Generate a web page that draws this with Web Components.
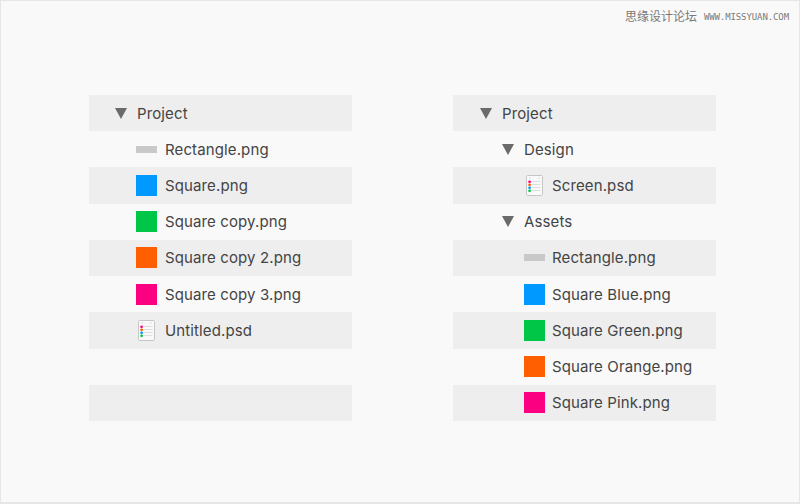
<!DOCTYPE html>
<html>
<head>
<meta charset="utf-8">
<style>
  html, body { margin: 0; padding: 0; }
  body { width: 800px; height: 504px; overflow: hidden; background: #f9f9f9; font-family: Inter, "Liberation Sans", sans-serif; }
</style>
</head>
<body>
<demo-frame>
  <span slot="mark">思缘设计论坛</span>
  <span slot="url">WWW.MISSYUAN.COM</span>
  <tree-panel>
    <tree-row indent="26" icon="arrow" band>Project</tree-row>
    <tree-row indent="47" icon="rect">Rectangle.png</tree-row>
    <tree-row indent="47" icon="#0099ff" band>Square.png</tree-row>
    <tree-row indent="47" icon="#00c647">Square copy.png</tree-row>
    <tree-row indent="47" icon="#ff5f00" band>Square copy 2.png</tree-row>
    <tree-row indent="47" icon="#fb0080">Square copy 3.png</tree-row>
    <tree-row indent="47" icon="psd" band>Untitled.psd</tree-row>
    <tree-row></tree-row>
    <tree-row band></tree-row>
  </tree-panel>
  <tree-panel style="--label-gap: 7px">
    <tree-row indent="27" icon="arrow" band>Project</tree-row>
    <tree-row indent="49" icon="arrow">Design</tree-row>
    <tree-row indent="71" icon="psd" band>Screen.psd</tree-row>
    <tree-row indent="49" icon="arrow">Assets</tree-row>
    <tree-row indent="71" icon="rect" band>Rectangle.png</tree-row>
    <tree-row indent="71" icon="#0099ff">Square Blue.png</tree-row>
    <tree-row indent="71" icon="#00c647" band>Square Green.png</tree-row>
    <tree-row indent="71" icon="#ff5f00">Square Orange.png</tree-row>
    <tree-row indent="71" icon="#fb0080" band>Square Pink.png</tree-row>
  </tree-panel>
</demo-frame>
<script>
class DemoFrame extends HTMLElement {
  constructor() {
    super()
    this.attachShadow({mode: "open"}).innerHTML = `
      <style>
        :host { display: block; box-sizing: border-box; width: 800px; height: 504px; border: 1px solid #e6e6e6; border-width: 1px 1px 2px 1px; background: #f9f9f9; }
        header { display: flex; justify-content: flex-end; align-items: center; gap: 7px; height: 29px; padding-right: 10px; color: #7a7a7a; }
        .mark { font: 12px/1 "Noto Sans CJK SC", sans-serif; }
        .url { font: 9px/1 "DejaVu Sans Mono", monospace; letter-spacing: -0.1px; margin-top: 4px; }
        main { display: flex; gap: 101px; padding: 65px 0 0 88px; }
      </style>
      <header><span class="mark"><slot name="mark"></slot></span><span class="url"><slot name="url"></slot></span></header>
      <main><slot></slot></main>
    `
  }
}
customElements.define("demo-frame", DemoFrame)

class TreePanel extends HTMLElement {
  constructor() {
    super()
    this.attachShadow({mode: "open"}).innerHTML = `
      <style>
        :host { display: grid; width: 263px; height: 326px; grid-template-rows: repeat(9, 1fr); }
      </style>
      <slot></slot>
    `
  }
}
customElements.define("tree-panel", TreePanel)

const PSD = `<svg class="psd" width="17" height="21" viewBox="0 0 17 21">
  <rect x="0.5" y="0.5" width="16" height="20" rx="1.2" fill="#f9f9f9" stroke="#c6c6c6"/>
  <path d="M3 3h2M12 3h2" stroke="#dcdcdc"/>
  <path d="M5.5 6.5h9M5.5 9.5h9M5.5 12.5h9M5.5 15.5h9" stroke="#dedede"/>
  <circle cx="3.6" cy="6.8" r="1.4" fill="#fb0080"/>
  <circle cx="3.6" cy="9.8" r="1.4" fill="#ff5f00"/>
  <circle cx="3.6" cy="12.8" r="1.4" fill="#0099ff"/>
  <circle cx="3.6" cy="15.8" r="1.4" fill="#00c647"/>
</svg>`

class TreeRow extends HTMLElement {
  constructor() {
    super()
    const indent = parseFloat(this.getAttribute("indent") || 0)
    const icon = this.getAttribute("icon")
    const arrow = icon == "arrow"
    let glyph = ""
    if (arrow) glyph = `<svg width="12" height="11" viewBox="0 0 12 11"><path d="M0 0h12L6 11z" fill="#6a6a6a"/></svg>`
    else if (icon == "rect") glyph = `<i class="rect"></i>`
    else if (icon == "psd") glyph = PSD
    else if (icon) glyph = `<i class="sq" style="background:${icon}"></i>`
    this.attachShadow({mode: "open"}).innerHTML = `
      <style>
        :host { display: flex; align-items: center; min-height: 0; color: #444; font-size: 15px; letter-spacing: 0.12px; }
        :host([band]) { background: #eeeeee; }
        .glyph { display: flex; align-items: center; flex: none; }
        .psd { margin-left: 2px; }
        .rect { display: block; width: 21px; height: 7px; background: #c9c9c9; }
        .sq { display: block; width: 21px; height: 21px; }
      </style>
      <span class="glyph" style="margin-left:${indent}px;width:${arrow ? 12 : 21}px"></span>
      <span style="margin-left:${arrow ? "10px" : "var(--label-gap, 8px)"}"><slot></slot></span>
    `
    this.shadowRoot.querySelector(".glyph").innerHTML = glyph
  }
}
customElements.define("tree-row", TreeRow)
</script>
</body>
</html>
